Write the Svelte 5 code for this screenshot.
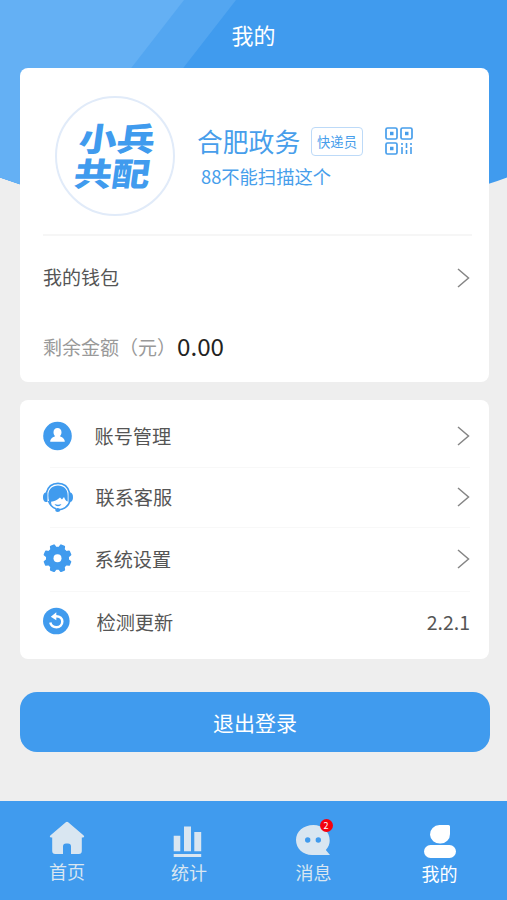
<script>
  const menu = [
    { id: 'account', label: '账号管理' },
    { id: 'service', label: '联系客服' },
    { id: 'settings', label: '系统设置' },
    { id: 'update', label: '检测更新', value: '2.2.1' }
  ];
  const tabs = [
    { id: 'home', label: '首页' },
    { id: 'stats', label: '统计' },
    { id: 'message', label: '消息', badge: 2 },
    { id: 'me', label: '我的', active: true }
  ];
</script>

{#snippet chevron()}
  <svg class="chevron" width="14" height="22" viewBox="0 0 14 22"><path d="M2 2L12.500 11L2 20" fill="none" stroke="#858585" stroke-width="1.5" /></svg>
{/snippet}

<div class="screen">
  <svg class="backdrop" width="507" height="220" viewBox="0 0 507 220">
    <path d="M0 0H507V177.500Q490 184 470 189Q254 240 36 189Q18 184 0 177.500Z" fill="#409bee" />
    <path d="M0 0H236L184 67L90 190L36 189Q18 184 0 177.500Z" fill="#53a6f1" />
    <path d="M0 0H184L132 67L36 189Q18 184 0 177.500Z" fill="#64b0f4" />
  </svg>

  <header>我的</header>

  <section class="card profile-card">
    <div class="profile">
      <div class="avatar">
        <div class="brand"><span>小兵</span><span>共配</span></div>
      </div>
      <div class="identity">
        <div class="name-row">
          <span class="name">合肥政务</span>
          <span class="tag">快递员</span>
          <svg width="28" height="28" viewBox="0 0 28 28" fill="none" stroke="#479eeb" stroke-width="1.700">
            <rect x="1" y="1" width="11" height="11" rx="1.500" />
            <rect x="16" y="1" width="11" height="11" rx="1.500" />
            <rect x="1" y="16" width="11" height="11" rx="1.500" />
            <path d="M5 6.500h3.500M20 6.500h3.500M5 21.500h3.500" stroke-width="3.500" />
            <path d="M17 16v2M17 20v7M21.500 16v5M21.500 23v4M26 16v2M26 20v7" stroke-width="1.600" />
          </svg>
        </div>
        <div class="account-name">88不能扫描这个</div>
      </div>
    </div>
    <div class="wallet">
      <span>我的钱包</span>
      {@render chevron()}
    </div>
    <div class="balance"><span>剩余金额（元）</span><b>0.00</b></div>
  </section>

  <section class="card menu">
    {#each menu as item}
      <div class="item {item.id}">
        <span class="icon">
          {#if item.id === 'account'}
            <svg width="30" height="30" viewBox="0 0 30 30"><circle cx="14.500" cy="15" r="14.300" fill="#409bee" /><path d="M14.500 7c2.500 0 4 1.800 4 4.200 0 1.800-.7 3-1.600 3.900.2 1 4.900 1.400 4.900 5.700H7.200c0-4.300 4.700-4.700 4.900-5.700-.9-.9-1.600-2.100-1.600-3.900C10.500 8.800 12 7 14.500 7Z" fill="#fff" /></svg>
          {:else if item.id === 'service'}
            <svg width="30" height="30" viewBox="0 0 30 30">
              <path d="M3.300 11C5 4.500 9.500 1.400 15 1.400S25 4.500 26.700 11" fill="none" stroke="#409bee" stroke-width="1.600" />
              <path d="M5.300 13.500C5.300 7 9.500 3.600 15 3.600S24.700 7 24.700 13.500V19.500C23 19 21.800 17.200 21 15L19 17.500L17 15.500C14 18 11.500 19.300 8 19.700L8.500 23C6.500 21.500 5.300 18 5.300 13.500Z" fill="#409bee" />
              <path d="M2.800 10.500H4.500v9.500H2.800C.6 19.500 0 17.500 0 15.200s.6-4.200 2.800-4.700ZM27.200 10.500h-1.700v9.500h1.700c2.200-.5 2.800-2.500 2.800-4.800s-.6-4.200-2.800-4.700Z" fill="#409bee" />
              <path d="M5.500 19C7 23.500 9.500 25.600 13 26.800" fill="none" stroke="#409bee" stroke-width="1.500" />
              <path d="M11.500 22q3.500 1.300 7 0q-1 2.300-3.500 2.300t-3.500-2.300Z" fill="#409bee" />
              <path d="M26.800 19.500c-1.500 4.500-5 7.500-11.300 8.500" fill="none" stroke="#409bee" stroke-width="1.600" /><ellipse cx="14.700" cy="28" rx="2.500" ry="2" fill="#409bee" />
            </svg>
          {:else if item.id === 'settings'}
            <svg width="30" height="30" viewBox="-14.500 -14.200 30 30">
              <g fill="#409bee" stroke="#409bee" stroke-linejoin="round">
                <circle r="11.500" stroke="none" />
                {#each [0, 1, 2, 3, 4, 5, 6, 7] as i}
                  <path d="M-2.800-9L-1.700-13.200H1.700L2.800-9Z" stroke-width="2" transform="rotate({i * 45 + 22.5})" />
                {/each}
              </g>
              <circle r="4" fill="#fff" />
            </svg>
          {:else}
            <svg width="30" height="30" viewBox="0 0 30 30"><circle cx="13.300" cy="14" r="13.300" fill="#409bee" /><path d="M13 9.200C17 9.200 19.300 11.500 19.300 14.500C19.300 18 16.800 20.200 13.500 20.200C10.500 20.200 8 18.500 7.300 15.500" fill="none" stroke="#fff" stroke-width="2.500" /><path d="M7.800 9.700L13.300 5.300V13.200Z" fill="#fff" /></svg>
          {/if}
        </span>
        <span class="label">{item.label}</span>
        {#if item.value}<span class="version">{item.value}</span>{:else}{@render chevron()}{/if}
      </div>
    {/each}
  </section>

  <button>退出登录</button>

  <nav>
    {#each tabs as tab}
      <div class="tab {tab.id}" class:active={tab.active}>
        <span class="tab-icon">
          {#if tab.id === 'home'}
            <svg width="36" height="36" viewBox="0 0 36 36"><path d="M16.800 2.300q1.200-1 2.400 0L34.700 15.500q1.300 1.500-.5 2H32.800V31q0 3-3 3H22V26.500q0-3-3-3h-2q-3 0-3 3V34H6.200q-3 0-3-3V17.500H1.800q-1.800-.5-.5-2Z" fill="currentColor" /></svg>
          {:else if tab.id === 'stats'}
            <svg width="36" height="36" viewBox="0 0 36 36"><path d="M2.700 15.800h6.600v15.400H2.700ZM13 6.500h7v24.700h-7ZM23.300 12h6.900v19.200h-6.900ZM2.700 34h27.500v3H2.700Z" fill="currentColor" /></svg>
          {:else if tab.id === 'message'}
            <svg width="36" height="36" viewBox="0 0 36 36"><path d="M17.500 5C7.500 5 0 11.500 0 20s7 15 16 15H34L29.800 30C32.500 27 33.700 24 33.700 20.500C33.700 11.500 26.500 5 17.500 5Z" fill="currentColor" /><circle cx="11.700" cy="20" r="2.700" fill="#409bee" /><circle cx="22.300" cy="20" r="2.700" fill="#409bee" /></svg>
            <i>{tab.badge}</i>
          {:else}
            <svg width="36" height="36" viewBox="0 0 36 36"><path d="M17.500 5H26.500Q28 5 28 6.500V14A10 9.300 0 1 1 17.500 5Z" fill="currentColor" /><rect x="2" y="25" width="32" height="13" rx="6.500" fill="currentColor" /></svg>
          {/if}
        </span>
        <span class="tab-label">{tab.label}</span>
      </div>
    {/each}
  </nav>
</div>

<style>
  :global(body) { margin: 0; }
  .screen {
    position: relative;
    width: 507px;
    height: 900px;
    overflow: hidden;
    display: flex;
    flex-direction: column;
    background: #eee;
    font-family: 'Noto Sans CJK SC', sans-serif;
    color: #555;
  }
  .screen * { box-sizing: border-box; }
  svg { display: block; flex: none; overflow: visible; }
  .backdrop { position: absolute; top: 0; left: 0; }
  header {
    position: relative;
    height: 68px;
    line-height: 68px;
    text-align: center;
    font-size: 22px;
    color: #fff;
  }
  .card { position: relative; margin: 0 18px 0 20px; background: #fff; border-radius: 8px; flex: none; }
  .profile-card { height: 314px; }
  .profile {
    display: flex;
    height: 168px;
    margin: 0 17px 0 23px;
    padding: 28px 0 0 12px;
    border-bottom: 2px solid #f6f6f6;
  }
  .avatar {
    width: 120px;
    height: 120px;
    border: 2px solid #e1ebf9;
    border-radius: 50%;
    display: flex;
    align-items: center;
    justify-content: center;
  }
  .brand {
    display: flex;
    flex-direction: column;
    font-size: 38px;
    font-weight: 900;
    line-height: 41px;
    color: #409bee;
    transform: translateY(-1.500px) skewX(-8deg) scaleY(0.85);
  }
  .identity { color: #479eeb; padding: 27px 0 0 22px; }
  .name-row { display: flex; align-items: center; height: 36px; }
  .name { font-size: 25.8px; line-height: 36px; width: 114px; white-space: nowrap; }
  .tag {
    width: 52px;
    height: 29px;
    margin-right: 22px;
    border: 1.500px solid #bddaf8;
    border-radius: 4px;
    font-size: 13.3px;
    line-height: 27px;
    text-align: center;
  }
  .account-name { font-size: 18.3px; line-height: 26px; padding: 4px 0 0 4px; }
  .wallet {
    display: flex;
    align-items: center;
    justify-content: space-between;
    height: 84px;
    padding: 0 19px 0 23px;
    font-size: 19px;
  }
  .wallet span { padding-bottom: 3px; }
  .balance { display: flex; align-items: center; height: 50px; padding-left: 23px; font-size: 19px; color: #999; }
  .balance b { font-size: 24.2px; font-weight: 400; color: #222; margin-left: 1px; }
  .balance span { padding-top: 3px; }
  .menu { height: 259px; margin-top: 18px; padding-top: 5px; }
  .item { position: relative; display: flex; align-items: center; height: 62px; padding: 0 19px 0 23px; }
  .item + .item::before {
    content: '';
    position: absolute;
    left: 30px;
    right: 19px;
    top: 0;
    height: 1px;
    background: #f8f8f8;
  }
  .service { height: 60px; }
  .settings { height: 64px; }
  .update { height: 61px; }
  .icon { width: 51.500px; }
  .label { flex: 1; font-size: 19.2px; line-height: 28px; }
  .service .label { padding-left: 1px; }
  .update .label { padding-left: 2px; }
  .version { font-size: 19.500px; }
  button {
    position: relative;
    flex: none;
    height: 60px;
    margin: 33px 17px 0 20px;
    padding: 0;
    border: 0;
    border-radius: 17px;
    background: #409bee;
    color: #fff;
    font: 21px/60px 'Noto Sans CJK SC', sans-serif;
  }
  nav {
    display: flex;
    height: 99px;
    margin-top: auto;
    background: #409bee;
    padding-left: 5px;
  }
  .tab { width: 124px; display: flex; flex-direction: column; align-items: center; padding-top: 19px; color: #d9e6f1; }
  .stats { width: 120px; }
  .message { width: 129px; }
  .me { width: 123px; }
  .tab-icon { position: relative; }
  .tab-label { font-size: 18px; line-height: 26px; margin-top: 2px; }
  .stats .tab-label, .message .tab-label { margin-top: 3px; }
  .me .tab-label { margin-top: 4px; }
  .active { color: #fff; }
  i {
    position: absolute;
    left: 24px;
    top: -1px;
    width: 13px;
    height: 13px;
    border-radius: 50%;
    background: #f5000c;
    color: #fff;
    font: 9px/13px 'Noto Sans CJK SC', sans-serif;
    text-align: center;
  }
</style>
